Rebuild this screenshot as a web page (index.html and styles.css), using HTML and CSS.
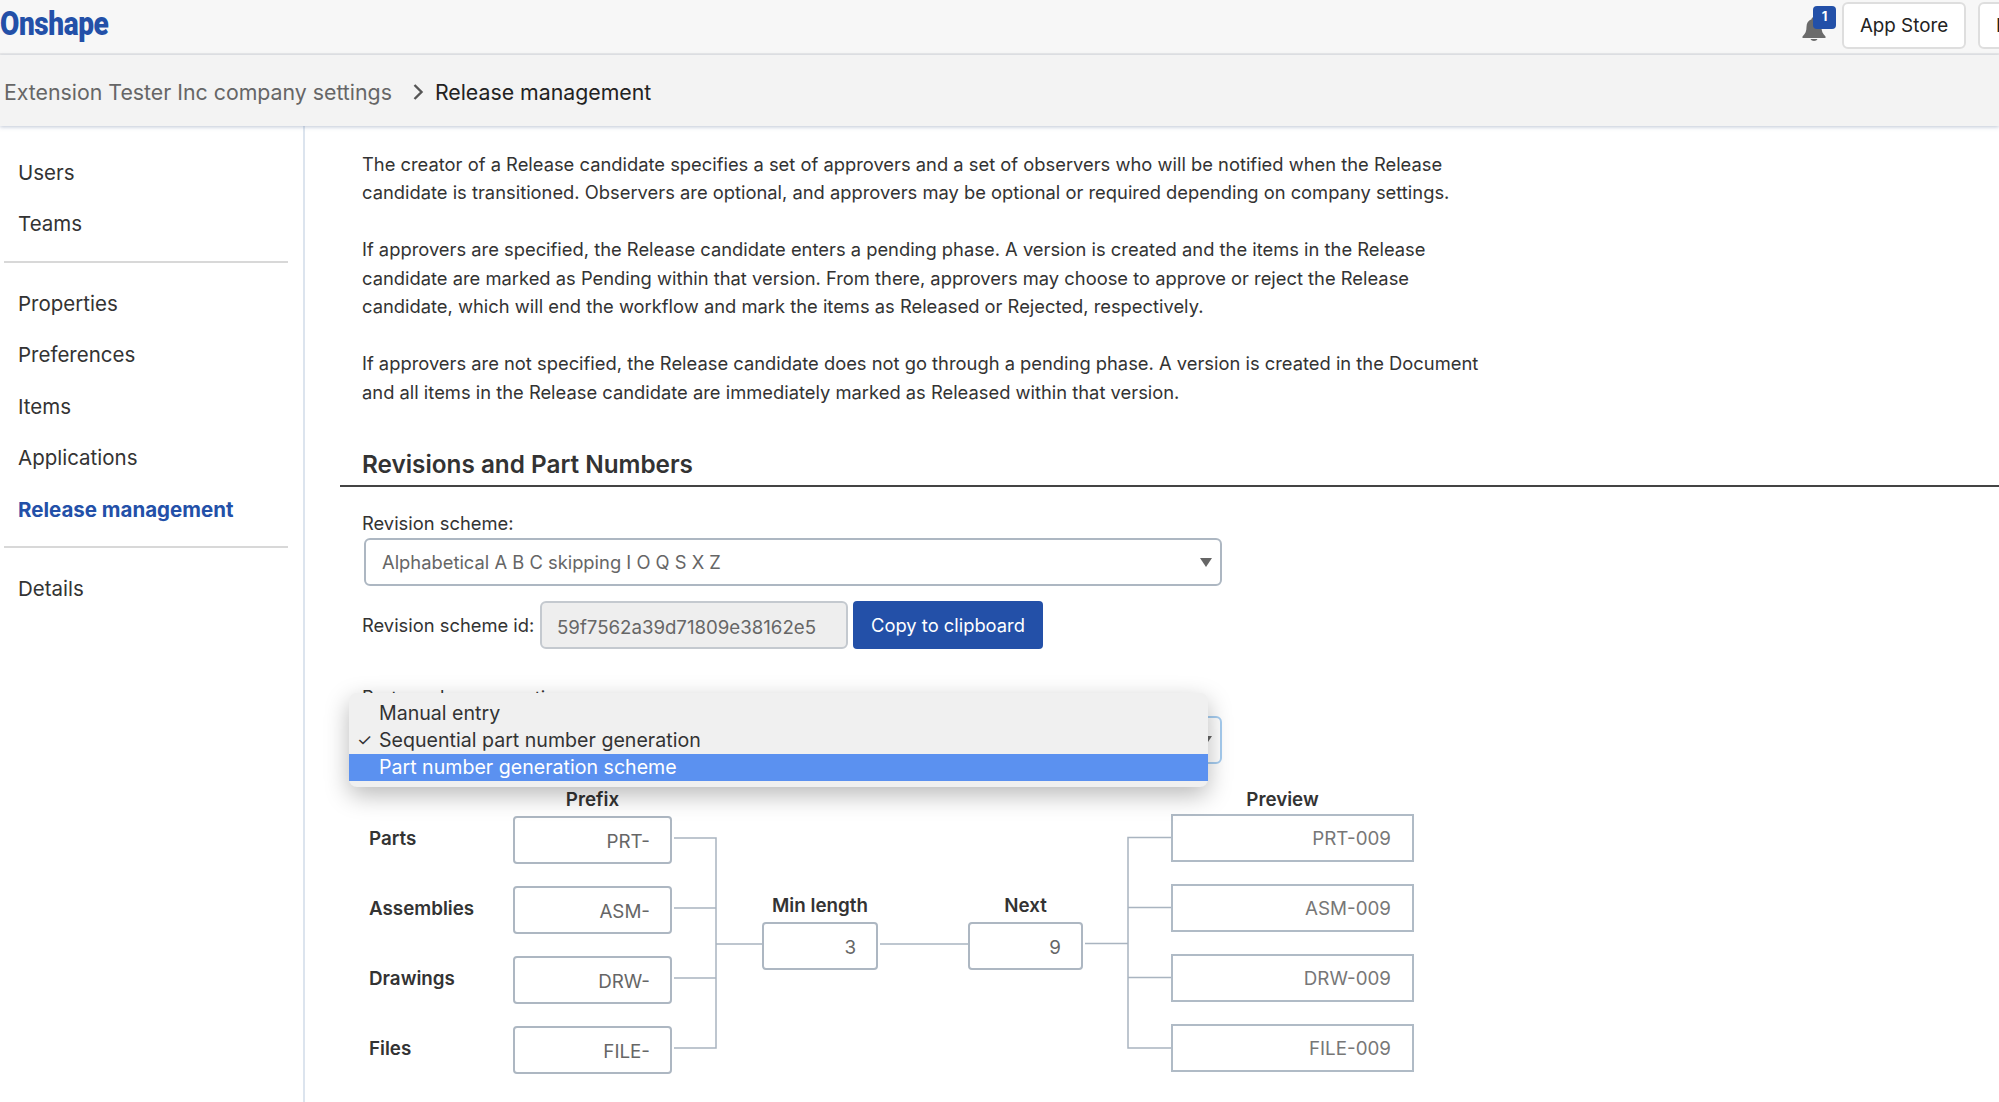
FILE: index.html
```html
<!DOCTYPE html>
<html lang="en">
<head>
  <meta charset="UTF-8" />
  <title>Release management</title>
  <link rel="stylesheet" href="styles.css">
</head>
<body>

  <header class="topbar">
    <span class="logo">Onshape</span>
    <div class="topbar-right">
      <div class="bell">
        <svg width="24" height="24" viewBox="0 0 24 24"><path fill="#6b6b6b" d="M12 0c1.500 0 2.500 1 2.500 2.300C18 3.500 19.500 6.500 19.500 10c0 4 1 6.500 4 9.500v1.500H.5v-1.500c3-3 4-5.500 4-9.500 0-3.500 1.500-6.500 5-7.700C9.500 1 10.500 0 12 0zM8.500 22h7c-.5 1.300-2 2-3.500 2s-3-.7-3.500-2z"/></svg>
        <span class="badge">1</span>
      </div>
      <button class="top-btn">App Store</button>
      <button class="top-btn top-btn-cut">Help</button>
    </div>
  </header>

  <div class="crumbs">
    <span class="crumb-parent">Extension Tester Inc company settings</span>
    <svg class="crumb-sep" width="12" height="18" viewBox="0 0 12 18"><path fill="none" stroke="#555" stroke-width="2.400" d="M2.500 2l7 7-7 7"/></svg>
    <span class="crumb-current">Release management</span>
  </div>

  <div class="layout">
    <nav class="sidebar">
      <a class="nav-item">Users</a>
      <a class="nav-item">Teams</a>
      <div class="nav-divider"></div>
      <a class="nav-item">Properties</a>
      <a class="nav-item">Preferences</a>
      <a class="nav-item">Items</a>
      <a class="nav-item">Applications</a>
      <a class="nav-item nav-active">Release management</a>
      <div class="nav-divider"></div>
      <a class="nav-item">Details</a>
    </nav>

    <main class="content">
      <div class="intro">
        <p>The creator of a Release candidate specifies a set of approvers and a set of observers who will be notified when the Release<br>candidate is transitioned. Observers are optional, and approvers may be optional or required depending on company settings.</p>
        <p>If approvers are specified, the Release candidate enters a pending phase. A version is created and the items in the Release<br>candidate are marked as Pending within that version. From there, approvers may choose to approve or reject the Release<br>candidate, which will end the workflow and mark the items as Released or Rejected, respectively.</p>
        <p>If approvers are not specified, the Release candidate does not go through a pending phase. A version is created in the Document<br>and all items in the Release candidate are immediately marked as Released within that version.</p>
      </div>

      <h2 class="section-title">Revisions and Part Numbers</h2>

      <div class="form">
        <label class="form-label">Revision scheme:</label>
        <div class="select">
          Alphabetical A B C skipping I O Q S X Z
          <span class="select-arrow"></span>
        </div>

        <div class="id-row">
          <label class="form-label">Revision scheme id:</label>
          <div class="id-value">59f7562a39d71809e38162e5</div>
          <button class="copy-btn">Copy to clipboard</button>
        </div>

        <div class="pn-block">
          <label class="form-label pn-label">Part number generation:</label>
          <div class="select select-focus"><span class="select-arrow"></span></div>
          <ul class="menu">
            <li>Manual entry</li>
            <li class="menu-checked">Sequential part number generation</li>
            <li class="menu-hover">Part number generation scheme</li>
          </ul>
        </div>

        <div class="diagram">
          <div class="col-names">
            <b>Parts</b>
            <b>Assemblies</b>
            <b>Drawings</b>
            <b>Files</b>
          </div>
          <div class="col-prefix">
            <div class="col-head">Prefix</div>
            <div class="box">PRT-</div>
            <div class="box">ASM-</div>
            <div class="box">DRW-</div>
            <div class="box">FILE-</div>
          </div>
          <svg class="wire" width="90" height="300" viewBox="0 0 90 300">
            <path d="M2 50h42M2 120h42M2 190h42M2 260h42M44 49.250v211.500M44 156h46"/>
          </svg>
          <div class="col-single col-min">
            <div class="col-head">Min length</div>
            <div class="box">3</div>
          </div>
          <svg class="wire" width="90" height="300" viewBox="0 0 90 300">
            <path d="M2 156h88"/>
          </svg>
          <div class="col-single col-next">
            <div class="col-head">Next</div>
            <div class="box">9</div>
          </div>
          <svg class="wire" width="88" height="300" viewBox="0 0 88 300">
            <path d="M2 155.500h43M45 49.500h43M45 119.500h43M45 189.500h43M45 260h43M45 48.750v212"/>
          </svg>
          <div class="col-preview">
            <div class="col-head">Preview</div>
            <div class="box-preview">PRT-009</div>
            <div class="box-preview">ASM-009</div>
            <div class="box-preview">DRW-009</div>
            <div class="box-preview">FILE-009</div>
          </div>
        </div>
      </div>
    </main>
  </div>

</body>
</html>
```

FILE: styles.css
```css
* {
  box-sizing: border-box;
}

html, body {
  height: 1102px;
  overflow: hidden;
}

body {
  margin: 0;
  background-color: white;
  color: #333;
  font-family: Inter, "Noto Sans", sans-serif;
  font-size: 18.350px;
}

/* top bar */
.topbar {
  display: flex;
  justify-content: space-between;
  align-items: flex-start;
  height: 55px;
  background-color: #f7f7f7;
  border-bottom: 2px solid #e9e9e9;
  overflow: hidden;
}

.logo {
  margin-top: 4px;
  color: #2350a8;
  font-family: Roboto, "Liberation Sans", sans-serif;
  font-weight: 900;
  font-size: 33px;
  line-height: 40px;
  letter-spacing: -0.5px;
  transform: scaleX(0.85);
  transform-origin: left;
}

.topbar-right {
  display: flex;
  flex-shrink: 0;
  width: 197px;
  padding-top: 2px;
}

.bell {
  position: relative;
  flex-shrink: 0;
  width: 40px;
  height: 47px;
  padding-top: 15px;
}

.badge {
  position: absolute;
  left: 11px;
  top: 4px;
  width: 23px;
  height: 23px;
  border-radius: 4px;
  background-color: #2350a8;
  color: white;
  font-size: 13px;
  font-weight: bold;
  line-height: 21px;
  text-align: center;
}

.top-btn {
  flex-shrink: 0;
  width: 124px;
  height: 47px;
  border: 2px solid #dedede;
  border-radius: 6px;
  background-color: white;
  color: #222;
  font-family: inherit;
  font-size: 18.800px;
}

.top-btn-cut {
  margin-left: 12px;
  padding-left: 16px;
  text-align: left;
}

/* breadcrumb */
.crumbs {
  position: relative;
  display: flex;
  align-items: center;
  height: 71px;
  padding: 2px 0 0 4px;
  background-color: #f3f3f3;
  box-shadow: 0 1px 4px rgba(90, 110, 150, 0.4);
  font-size: 21.300px;
}

.crumb-parent {
  color: #666;
}

.crumb-sep {
  margin: 0 11px 0 20px;
}

.crumb-current {
  color: #222;
}

.layout {
  display: flex;
  height: 976px;
}

/* sidebar */
.sidebar {
  flex-shrink: 0;
  width: 305px;
  padding: 20.500px 15px 0 4px;
  border-right: 2px solid #dce4ee;
}

.nav-item {
  display: block;
  padding-left: 14px;
  height: 51.500px;
  color: #333;
  font-size: 20.500px;
  line-height: 51.500px;
}

.nav-active {
  color: #2350a8;
  font-weight: bold;
}

.nav-divider {
  height: 2px;
  margin: 11px 0 15px;
  background-color: #d8d8d8;
}

/* main content */
.content {
  flex-grow: 1;
  min-width: 0;
}

.intro {
  padding: 23.500px 0 0 57px;
  line-height: 28.500px;
  white-space: nowrap;
}

.intro p {
  margin: 0 0 28.500px;
}

.section-title {
  margin: 42px 0 0 35px;
  padding: 0 0 5px 22px;
  border-bottom: 2px solid #444;
  color: #333;
  font-size: 24.300px;
  font-weight: 600;
  line-height: 32px;
}

.form {
  padding: 24px 0 0 57px;
}

.form-label {
  display: block;
  height: 27px;
  color: #333;
  line-height: 24px;
}

.select {
  position: relative;
  width: 858px;
  height: 48px;
  margin-left: 2px;
  padding-left: 16px;
  border: 2px solid #adb7c2;
  border-radius: 6px;
  background-color: white;
  color: #666;
  line-height: 45px;
}

.select-arrow {
  position: absolute;
  right: 8px;
  top: 18px;
  border-left: 6px solid transparent;
  border-right: 6px solid transparent;
  border-top: 9px solid #666;
}

.id-row {
  display: flex;
  align-items: center;
  margin-top: 15px;
}

.id-row .form-label {
  width: 178px;
  margin-top: 2px;
}

.id-value {
  width: 308px;
  height: 48px;
  padding-left: 15px;
  border: 2px solid #c4c9cf;
  border-radius: 6px;
  background-color: #eee;
  color: #666;
  font-size: 18.650px;
  line-height: 48px;
}

.copy-btn {
  width: 190px;
  height: 48px;
  margin-left: 5px;
  border: none;
  border-radius: 4px;
  background-color: #2350a8;
  color: white;
  font-family: inherit;
  font-size: 18.350px;
}

.pn-block {
  position: relative;
  height: 139px;
  padding-top: 36px;
}

.pn-label {
  height: 31px;
}

.select-focus {
  border-color: #a6cdf0;
}

.menu {
  position: absolute;
  left: -13px;
  top: 44px;
  width: 859px;
  height: 94px;
  margin: 0;
  padding: 7px 0 0;
  list-style: none;
  border-radius: 8px;
  background-color: #f0f0f0;
  box-shadow: 0 8px 24px rgba(0, 0, 0, 0.28);
  color: #333;
  font-size: 19.600px;
}

.menu li {
  height: 27px;
  padding-left: 30px;
  line-height: 27px;
}

.menu-checked::before {
  content: "\2713";
  position: absolute;
  left: 8px;
  font-size: 17px;
}

.menu .menu-hover {
  background-color: #5b91f0;
  color: white;
}

/* part number diagram */
.diagram {
  display: flex;
  align-items: flex-start;
  height: 310px;
  padding-left: 7px;
  font-size: 18.800px;
}

.col-names {
  display: flex;
  flex-direction: column;
  gap: 28px;
  width: 144px;
  padding-top: 30px;
}

.col-names b {
  height: 42px;
  font-weight: 600;
  line-height: 42px;
}

.col-head {
  height: 24px;
  margin-bottom: 4px;
  color: #333;
  font-weight: 600;
  line-height: 24px;
  text-align: center;
}

.col-prefix {
  width: 159px;
}

.box {
  height: 48px;
  padding: 4px 20px 0 0;
  border: 2px solid #adb7c2;
  border-radius: 4px;
  background-color: white;
  color: #666;
  line-height: 40px;
  text-align: right;
}

.col-prefix .box {
  margin-bottom: 22px;
}

.wire path {
  fill: none;
  stroke: #a9b4c0;
  stroke-width: 1.500;
}

.col-single {
  padding-top: 106px;
}

.col-min {
  width: 116px;
}

.col-next {
  width: 115px;
}

.col-preview {
  width: 243px;
}

.col-preview .col-head {
  margin-bottom: 2px;
  padding-right: 20px;
}

.box-preview {
  height: 48px;
  margin-bottom: 22px;
  padding-right: 21px;
  border: 2px solid #b0bbc6;
  color: #777;
  line-height: 46px;
  text-align: right;
}
```
